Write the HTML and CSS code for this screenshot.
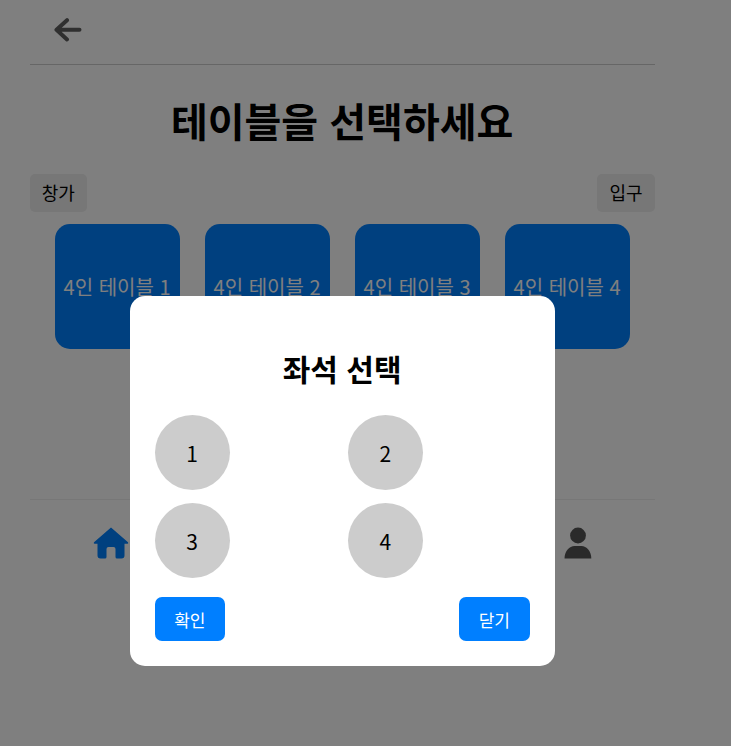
FILE: index.html
```html
<!DOCTYPE html>
<html lang="ko">
<head>
<meta charset="utf-8">
<title>테이블 선택</title>
<link rel="stylesheet" href="styles.css">
</head>
<body>
<div class="app">
  <header class="header">
    <svg class="back" width="28" height="24" viewBox="0 0 28 24"><path d="M25.500 11.800H3M13 2.200L2.500 11.800L13 21.400" fill="none" stroke="currentColor" stroke-width="4" stroke-linecap="round" stroke-linejoin="round"/></svg>
  </header>
  <h1 class="title">테이블을 선택하세요</h1>
  <div class="labels">
    <span class="label">창가</span>
    <span class="label">입구</span>
  </div>
  <div class="tables">
    <div class="table">4인 테이블 1</div>
    <div class="table">4인 테이블 2</div>
    <div class="table">4인 테이블 3</div>
    <div class="table">4인 테이블 4</div>
  </div>
  <nav class="nav">
    <svg class="nav-home" width="36" height="32" viewBox="0 0 36 32"><path d="M18 0.500L35 15.200Q35.800 16.500 34.500 16.800H31.500V28.500Q31.500 31.500 28.500 31.500H24Q22.500 31.500 22.500 30V22Q22.500 20 20.500 20H15.500Q13.500 20 13.500 22V30Q13.500 31.500 12 31.500H7.500Q4.500 31.500 4.500 28.500V16.800H1.500Q0.200 16.500 1 15.200Z" fill="currentColor"/></svg>
    <svg class="nav-user" width="28" height="32" viewBox="0 0 28 32"><circle cx="14" cy="8.500" r="7.900" fill="currentColor"/><path d="M0.500 31.500C0.500 24 5.500 19 10.500 19H17.500C22.500 19 27.300 24 27.300 31.500Z" fill="currentColor"/></svg>
  </nav>
</div>
<div class="overlay">
  <div class="modal">
    <h2 class="modal-title">좌석 선택</h2>
    <div class="seats">
      <div class="seat">1</div>
      <div class="seat">2</div>
      <div class="seat">3</div>
      <div class="seat">4</div>
    </div>
    <div class="actions">
      <button class="btn">확인</button>
      <button class="btn">닫기</button>
    </div>
  </div>
</div>
</body>
</html>
```
FILE: styles.css
```css
* { box-sizing: border-box; }
html, body { margin: 0; height: 100%; }
body {
  background: #fff;
  color: #000;
  font-family: "Noto Sans CJK KR", "Noto Sans", sans-serif;
  overflow: hidden;
}
.app { width: 625px; margin-left: 29.600px; }
.header {
  height: 65px;
  border-bottom: 1px solid #ccc;
  padding: 18px 0 0 24px;
}
.back { display: block; color: #5e5e5e; }
.title {
  margin: 26px 0 0;
  font-size: 40px;
  line-height: 58px;
  font-weight: 700;
  text-align: center;
}
.labels {
  display: flex;
  justify-content: space-between;
  margin-top: 25px;
}
.label {
  height: 38px;
  padding: 0 12.100px;
  background: #eee;
  border-radius: 5px;
  font-size: 18px;
  line-height: 37px;
}
.tables {
  display: flex;
  justify-content: center;
  gap: 25px;
  margin-top: 12px;
}
.table {
  width: 125px;
  height: 125px;
  display: flex;
  align-items: center;
  justify-content: center;
  background: #0080ff;
  border-radius: 15px;
  color: #fff;
  font-size: 20px;
  white-space: nowrap;
}
.nav {
  display: flex;
  justify-content: space-between;
  margin-top: 150px;
  padding: 27px 63px 0;
  border-top: 1px solid #eee;
}
.nav-home { display: block; color: #0080ff; }
.nav-user { display: block; color: #555; }
.overlay {
  position: fixed;
  inset: 0;
  background: rgba(0, 0, 0, 0.5);
}
.modal {
  position: absolute;
  left: 129.600px;
  top: 296px;
  width: 425px;
  height: 370px;
  padding: 25px;
  background: #fff;
  border-radius: 15px;
}
.modal-title {
  margin: 25px 0 0;
  font-size: 30px;
  line-height: 44px;
  font-weight: 700;
  text-align: center;
}
.seats {
  display: grid;
  grid-template-columns: 1fr 1fr;
  column-gap: 11.400px;
  row-gap: 13px;
  margin-top: 25px;
}
.seat {
  width: 75px;
  height: 75px;
  display: flex;
  align-items: center;
  justify-content: center;
  border-radius: 50%;
  background: #ccc;
  font-size: 21px;
}
.actions {
  display: flex;
  justify-content: space-between;
  margin-top: 19px;
}
.btn {
  width: 70.500px;
  height: 44px;
  padding: 0;
  border: 0;
  border-radius: 7px;
  background: #007fff;
  color: #fff;
  font-family: inherit;
  font-size: 17px;
}
```
